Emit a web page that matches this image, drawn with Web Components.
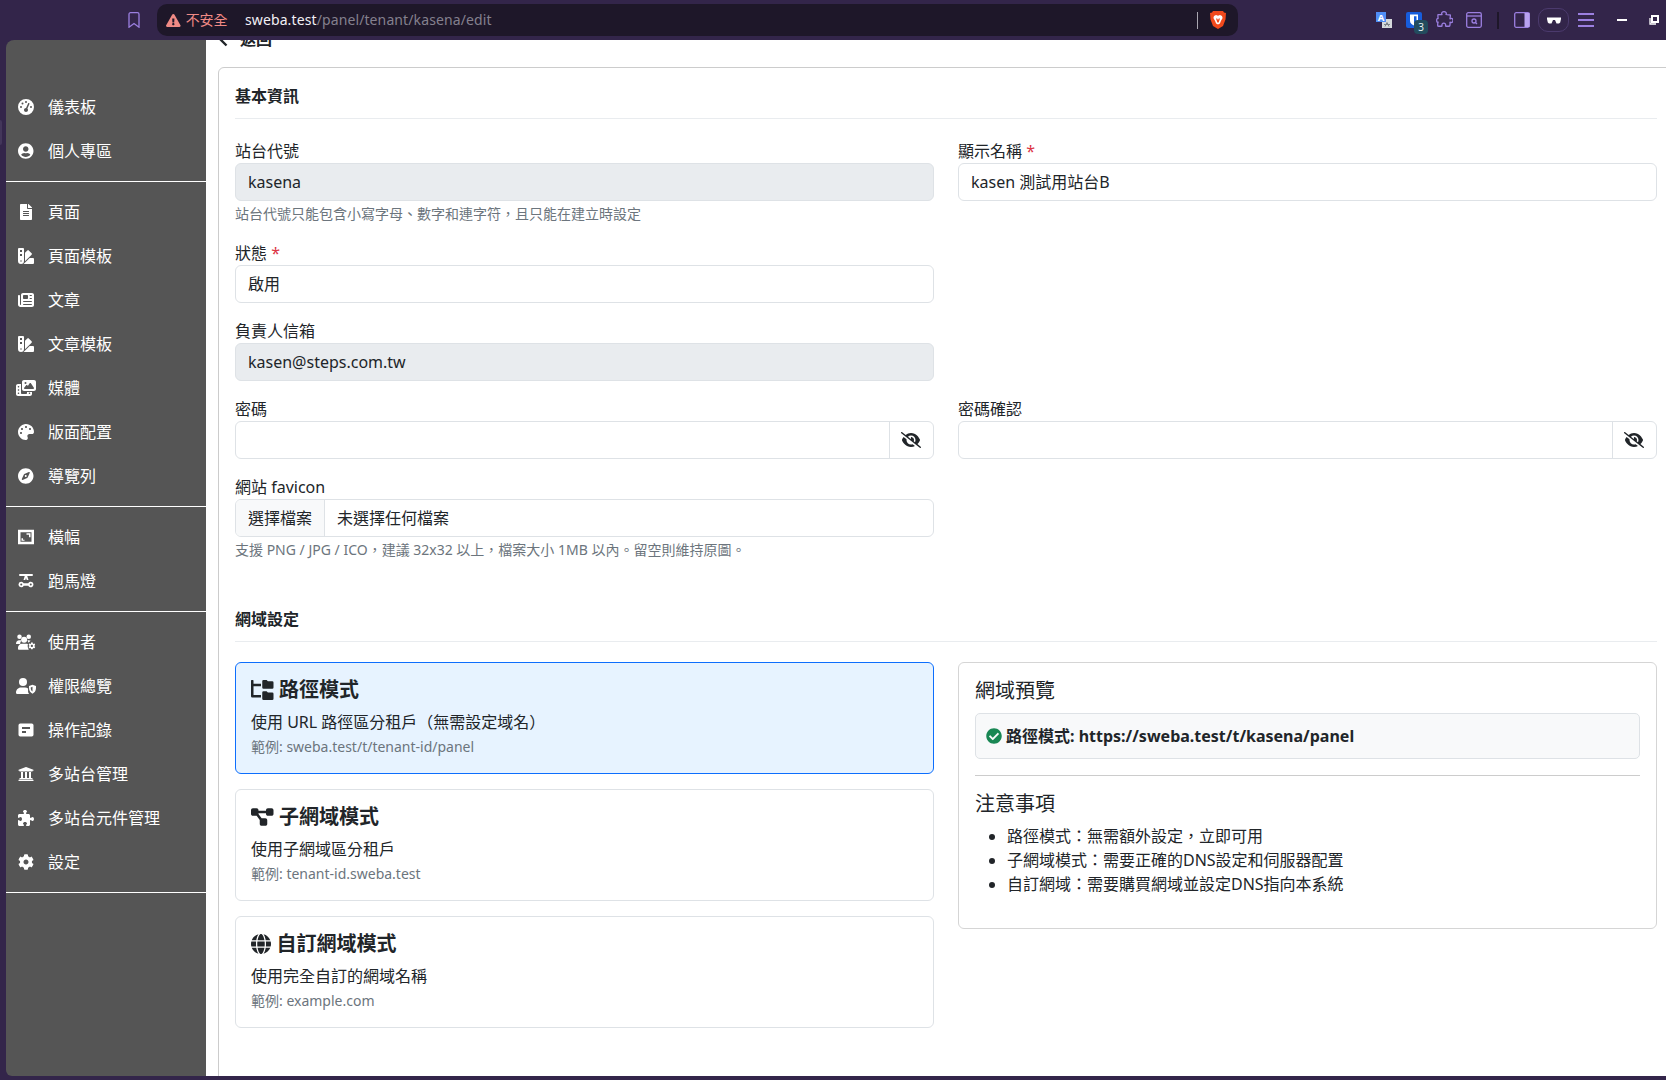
<!DOCTYPE html>
<html lang="zh-Hant">
<head>
<meta charset="utf-8">
<title>站台編輯</title>
<style>
  html, body { margin: 0; height: 100%; }
  body {
    width: 1666px;
    height: 1080px;
    overflow: hidden;
    background: #33254a;
    color: #212529;
    font: 16px/24px "Noto Sans", "Noto Sans CJK TC", sans-serif;
    display: flex;
    flex-direction: column;
    position: relative;
  }
  .app { display: flex; height: 1036px; padding-left: 6px; }
  .grid-2 { display: grid; grid-template-columns: 699px 699px; column-gap: 24px; align-items: start; }
  .stack { display: flex; flex-direction: column; gap: 15px; }
  .sheet-tab { position: absolute; left: 0; top: 120px; width: 2px; height: 25px; background: #43365a; border-radius: 0 3px 3px 0; }
</style>
</head>
<body>
<div class="sheet-tab"></div>
<browser-bar></browser-bar>
<div class="app">
  <side-nav>
    <nav-group>
      <nav-item icon="gauge">儀表板</nav-item>
      <nav-item icon="user-circle">個人專區</nav-item>
    </nav-group>
    <nav-group>
      <nav-item icon="file">頁面</nav-item>
      <nav-item icon="swatchbook">頁面模板</nav-item>
      <nav-item icon="newspaper">文章</nav-item>
      <nav-item icon="swatchbook">文章模板</nav-item>
      <nav-item icon="photo">媒體</nav-item>
      <nav-item icon="palette">版面配置</nav-item>
      <nav-item icon="compass">導覽列</nav-item>
    </nav-group>
    <nav-group>
      <nav-item icon="banner">橫幅</nav-item>
      <nav-item icon="carousel">跑馬燈</nav-item>
    </nav-group>
    <nav-group>
      <nav-item icon="users-gear">使用者</nav-item>
      <nav-item icon="user-shield">權限總覽</nav-item>
      <nav-item icon="logs">操作記錄</nav-item>
      <nav-item icon="landmark">多站台管理</nav-item>
      <nav-item icon="puzzle">多站台元件管理</nav-item>
      <nav-item icon="cog">設定</nav-item>
    </nav-group>
  </side-nav>
  <main-panel>
    <back-link>返回</back-link>
    <section-card>
      <form-section heading="基本資訊">
        <div class="grid-2">
          <form-field label="站台代號" value="kasena" readonly help="站台代號只能包含小寫字母、數字和連字符&#xFF0C;且只能在建立時設定"></form-field>
          <form-field label="顯示名稱" required value="kasen 測試用站台B"></form-field>
          <form-field label="狀態" required value="啟用"></form-field>
          <div></div>
          <form-field label="負責人信箱" value="kasen@steps.com.tw" readonly></form-field>
          <div></div>
          <form-field label="密碼" type="password"></form-field>
          <form-field label="密碼確認" type="password"></form-field>
          <form-field label="網站 favicon" type="file" value="未選擇任何檔案" help="支援 PNG / JPG / ICO&#xFF0C;建議 32x32 以上&#xFF0C;檔案大小 1MB 以內。留空則維持原圖。"></form-field>
        </div>
      </form-section>
      <form-section heading="網域設定" spaced>
        <div class="grid-2">
          <div class="stack">
            <mode-card icon="folder-tree" heading="路徑模式" active>
              使用 URL 路徑區分租戶&#xFF08;無需設定域名&#xFF09;
              <span slot="hint">範例: sweba.test/t/tenant-id/panel</span>
            </mode-card>
            <mode-card icon="diagram" heading="子網域模式">
              使用子網域區分租戶
              <span slot="hint">範例: tenant-id.sweba.test</span>
            </mode-card>
            <mode-card icon="globe" heading="自訂網域模式">
              使用完全自訂的網域名稱
              <span slot="hint">範例: example.com</span>
            </mode-card>
          </div>
          <domain-preview url="https://sweba.test/t/kasena/panel">
            <li>路徑模式&#xFF1A;無需額外設定&#xFF0C;立即可用</li>
            <li>子網域模式&#xFF1A;需要正確的DNS設定和伺服器配置</li>
            <li>自訂網域&#xFF1A;需要購買網域並設定DNS指向本系統</li>
          </domain-preview>
        </div>
      </form-section>
    </section-card>
  </main-panel>
</div>

<script>
const COG = 'M487.4 315.7l-42.6-24.6c4.3-23.2 4.3-47 0-70.2l42.6-24.6c4.9-2.8 7.1-8.6 5.5-14-11.1-35.6-30-67.8-54.7-94.6-3.8-4.1-10-5.1-14.8-2.3L380.8 110c-17.9-15.4-38.5-27.3-60.8-35.1V25.8c0-5.6-3.9-10.5-9.4-11.7-36.7-8.2-74.3-7.8-109.2 0-5.5 1.2-9.4 6.1-9.4 11.7V75c-22.2 7.9-42.8 19.8-60.8 35.1L88.7 85.5c-4.9-2.8-11-1.9-14.8 2.3-24.7 26.7-43.6 58.9-54.7 94.6-1.7 5.4.6 11.2 5.5 14L67.3 221c-4.3 23.2-4.3 47 0 70.2l-42.6 24.6c-4.9 2.8-7.1 8.6-5.5 14 11.1 35.6 30 67.8 54.7 94.6 3.8 4.1 10 5.1 14.8 2.3l42.6-24.6c17.9 15.4 38.5 27.3 60.8 35.1v49.2c0 5.6 3.9 10.5 9.4 11.7 36.7 8.2 74.3 7.8 109.2 0 5.5-1.2 9.4-6.1 9.4-11.7v-49.2c22.2-7.9 42.8-19.8 60.8-35.1l42.6 24.6c4.9 2.8 11 1.9 14.8-2.3 24.7-26.7 43.6-58.9 54.7-94.6 1.5-5.5-.7-11.3-5.6-14.1zM256 336c-44.1 0-80-35.9-80-80s35.9-80 80-80 80 35.9 80 80-35.9 80-80 80z';

const ICONS = {
  gauge: [512, '<path d="M0 256a256 256 0 1 1 512 0A256 256 0 1 1 0 256zM288 96a32 32 0 1 0 -64 0 32 32 0 1 0 64 0zM256 416c35.3 0 64-28.7 64-64c0-17.4-6.9-33.1-18.1-44.6L366 161.7c5.3-12.1-.2-26.3-12.3-31.6s-26.3 .2-31.6 12.3L257.9 288c-.6 0-1.3 0-1.9 0c-35.3 0-64 28.7-64 64s28.7 64 64 64zM176 144a32 32 0 1 0 -64 0 32 32 0 1 0 64 0zM96 288a32 32 0 1 0 0-64 32 32 0 1 0 0 64zm352-32a32 32 0 1 0 -64 0 32 32 0 1 0 64 0z"/>'],
  'user-circle': [496, '<path d="M248 8C111 8 0 119 0 256s111 248 248 248 248-111 248-248S385 8 248 8zm0 96c48.6 0 88 39.4 88 88s-39.4 88-88 88-88-39.4-88-88 39.4-88 88-88zm0 344c-58.7 0-111.3-26.6-146.5-68.2 18.8-35.4 55.6-59.8 98.5-59.8 2.4 0 4.8.4 7.1 1.1 13 4.2 26.6 6.9 40.9 6.9 14.3 0 28-2.7 40.9-6.9 2.3-.7 4.7-1.1 7.1-1.1 42.9 0 79.7 24.4 98.5 59.8C359.3 421.4 306.7 448 248 448z"/>'],
  file: [384, '<path d="M224 136V0H24C10.7 0 0 10.7 0 24v464c0 13.3 10.7 24 24 24h336c13.3 0 24-10.7 24-24V160H248c-13.2 0-24-10.8-24-24zm64 236c0 6.6-5.4 12-12 12H108c-6.6 0-12-5.4-12-12v-8c0-6.6 5.4-12 12-12h168c6.6 0 12 5.4 12 12v8zm0-64c0 6.6-5.4 12-12 12H108c-6.6 0-12-5.4-12-12v-8c0-6.6 5.4-12 12-12h168c6.6 0 12 5.4 12 12v8zm0-72v8c0 6.6-5.4 12-12 12H108c-6.6 0-12-5.4-12-12v-8c0-6.6 5.4-12 12-12h168c6.6 0 12 5.4 12 12zm96-114.1v6.1H256V0h6.1c6.4 0 12.5 2.5 17 7l97.9 98c4.5 4.5 7 10.6 7 16.9z"/>'],
  swatchbook: [512, '<path d="M434.66 167.71h0L344.5 77.36a31.83 31.83 0 0 0-45-.07h0l-.07.07L224 152.88V424L434.66 212.9A32 32 0 0 0 434.66 167.71ZM480 320H373.09L186.68 506.51c-2.06 2.07-4.5 3.58-6.68 5.49H480a32 32 0 0 0 32-32V352A32 32 0 0 0 480 320ZM192 32A32 32 0 0 0 160 0H32A32 32 0 0 0 0 32V416a96 96 0 0 0 192 0ZM96 440a24 24 0 1 1 24-24A24 24 0 0 1 96 440Zm32-184H64V192h64Zm0-128H64V64h64Z"/>'],
  newspaper: [512, '<path d="M96 96c0-35.3 28.7-64 64-64H448c35.3 0 64 28.7 64 64V416c0 35.3-28.7 64-64 64H80c-44.2 0-80-35.8-80-80V128c0-17.7 14.3-32 32-32s32 14.3 32 32V400c0 8.8 7.2 16 16 16s16-7.2 16-16V96zm64 24v80c0 13.3 10.7 24 24 24H296c13.3 0 24-10.7 24-24V120c0-13.3-10.7-24-24-24H184c-13.3 0-24 10.7-24 24zm208-8c0 8.8 7.2 16 16 16h48c8.8 0 16-7.2 16-16s-7.2-16-16-16H384c-8.8 0-16 7.2-16 16zm0 96c0 8.8 7.2 16 16 16h48c8.8 0 16-7.2 16-16s-7.2-16-16-16H384c-8.8 0-16 7.2-16 16zM160 304c0 8.8 7.2 16 16 16H432c8.8 0 16-7.2 16-16s-7.2-16-16-16H176c-8.8 0-16 7.2-16 16zm0 96c0 8.8 7.2 16 16 16H432c8.8 0 16-7.2 16-16s-7.2-16-16-16H176c-8.8 0-16 7.2-16 16z"/>'],
  photo: [640, '<path d="M256 0H576c35.3 0 64 28.7 64 64V288c0 35.3-28.7 64-64 64H256c-35.3 0-64-28.7-64-64V64c0-35.3 28.7-64 64-64zM476 106.7C471.5 100 464 96 456 96s-15.5 4-20 10.7l-56 84L362.7 169c-4.6-5.7-11.5-9-18.7-9s-14.2 3.3-18.7 9l-64 80c-5.8 7.2-6.9 17.1-2.9 25.4s12.4 13.6 21.6 13.6h80 48H552c8.9 0 17-4.9 21.2-12.7s3.7-17.3-1.2-24.6l-96-144zM336 96a32 32 0 1 0 -64 0 32 32 0 1 0 64 0zM64 128h96V384v32c0 17.7 14.3 32 32 32H320c17.7 0 32-14.3 32-32V384H512v64c0 35.3-28.7 64-64 64H64c-35.3 0-64-28.7-64-64V192c0-35.3 28.7-64 64-64zm8 64c-8.8 0-16 7.2-16 16v16c0 8.8 7.2 16 16 16H88c8.8 0 16-7.2 16-16V208c0-8.8-7.2-16-16-16H72zm0 104c-8.8 0-16 7.2-16 16v16c0 8.8 7.2 16 16 16H88c8.8 0 16-7.2 16-16V312c0-8.8-7.2-16-16-16H72zm0 104c-8.8 0-16 7.2-16 16v16c0 8.8 7.2 16 16 16H88c8.8 0 16-7.2 16-16V416c0-8.8-7.2-16-16-16H72zm336 16v16c0 8.8 7.2 16 16 16h16c8.8 0 16-7.2 16-16V416c0-8.8-7.2-16-16-16H424c-8.8 0-16 7.2-16 16z"/>'],
  palette: [512, '<path d="M204.3 5C104.9 24.4 24.8 104.3 5.2 203.4c-37 187 131.7 326.4 258.8 306.7 41.2-6.4 61.4-54.6 42.5-91.7-23.1-45.4 9.9-98.4 60.9-98.4h79.7c35.8 0 64.8-29.6 64.9-65.3C511.5 97.1 368.1-26.9 204.3 5zM96 320c-17.7 0-32-14.3-32-32s14.3-32 32-32 32 14.3 32 32-14.3 32-32 32zm32-128c-17.7 0-32-14.3-32-32s14.3-32 32-32 32 14.3 32 32-14.3 32-32 32zm128-64c-17.7 0-32-14.3-32-32s14.3-32 32-32 32 14.3 32 32-14.3 32-32 32zm128 64c-17.7 0-32-14.3-32-32s14.3-32 32-32 32 14.3 32 32-14.3 32-32 32z"/>'],
  compass: [496, '<path d="M225.38 233.37c-12.5 12.5-12.5 32.76 0 45.25 12.49 12.5 32.76 12.5 45.25 0 12.5-12.5 12.5-32.76 0-45.25-12.5-12.49-32.76-12.49-45.25 0zM248 8C111.03 8 0 119.03 0 256s111.03 248 248 248 248-111.03 248-248S384.97 8 248 8zm126.14 148.05L308.17 300.4a31.938 31.938 0 0 1-15.77 15.77l-144.34 65.97c-16.65 7.61-33.81-9.55-26.2-26.2l65.98-144.35a31.938 31.938 0 0 1 15.77-15.77l144.34-65.97c16.65-7.6 33.8 9.55 26.19 26.2z"/>'],
  banner: [512, '<path fill-rule="evenodd" d="M0 24h512v464H0zM80 104v304h352V104z"/><path d="M272 136h128v128h-48v-80h-80zM112 296h48v48h48v32h-96z"/>'],
  carousel: [512, '<path d="M64 32h384a32 32 0 0 1 0 64H296l40 128h-56l-24-64-24 64h-56l40-128H64a32 32 0 0 1 0-64z"/><path fill-rule="evenodd" d="M104 280a88 88 0 0 1 80 48h144a88 88 0 1 1 0 80H184a88 88 0 1 1-80-128zM104 336a32 32 0 1 0 0 64 32 32 0 1 0 0-64zM408 336a32 32 0 1 0 0 64 32 32 0 1 0 0-64z"/>'],
  'users-gear': [640, `<circle cx="112" cy="88" r="72"/><circle cx="408" cy="88" r="72"/><circle cx="260" cy="184" r="96"/><path d="M0 312c0-64 44-112 104-112h36c14 0 28 3 40 9-30 28-46 66-44 111H16c-9 0-16-2-16-8zM372 200h40c20 0 40 6 56 18l-72 62c-8-30-14-50-36-78zM64 480v-40c0-74 58-128 128-128h136c32 0 60 12 76 40v152H88c-14 0-24-10-24-24z"/><circle cx="508" cy="380" r="136" fill="#555"/><path transform="translate(396 268) scale(.44)" d="${COG}"/>`],
  'user-shield': [640, '<circle cx="224" cy="128" r="128"/><path d="M0 464c0-82 66-160 160-160h128c38 0 70 9 98 30v88c0 36 14 62 38 90H40c-22 0-40-18-40-48z"/><path fill-rule="evenodd" d="M528 212l112 46v70c0 84-54 148-112 172-58-24-112-88-112-172v-70zM528 280l-56 22v26c0 48 26 84 56 104z"/>'],
  logs: [512, '<path fill-rule="evenodd" d="M72 48h368a56 56 0 0 1 56 56v304a56 56 0 0 1-56 56H72a56 56 0 0 1-56-56V104a56 56 0 0 1 56-56zM128 160v64h256v-64zM128 288v64h128v-64z"/>'],
  landmark: [512, '<path d="M496 128v16a8 8 0 0 1-8 8h-24v12c0 6.627-5.373 12-12 12H60c-6.627 0-12-5.373-12-12v-12H24a8 8 0 0 1-8-8v-16a8 8 0 0 1 4.941-7.392l232-88a7.996 7.996 0 0 1 6.118 0l232 88A8 8 0 0 1 496 128zm-24 304H40c-13.255 0-24 10.745-24 24v16a8 8 0 0 0 8 8h464a8 8 0 0 0 8-8v-16c0-13.255-10.745-24-24-24zM96 192v192H60c-6.627 0-12 5.373-12 12v20h416v-20c0-6.627-5.373-12-12-12h-36V192h-64v192h-64V192h-64v192h-64V192H96z"/>'],
  puzzle: [512, '<path d="M192 104.8c0-9.2-5.8-17.3-13.2-22.8C167.2 73.3 160 61.3 160 48c0-26.5 28.7-48 64-48s64 21.5 64 48c0 13.3-7.2 25.3-18.8 34c-7.4 5.5-13.2 13.6-13.2 22.8v0c0 12.8 10.4 23.2 23.2 23.2H336c26.5 0 48 21.5 48 48v56.8c0 12.8 10.4 23.2 23.2 23.2v0c9.2 0 17.3-5.8 22.8-13.2c8.7-11.6 20.7-18.8 34-18.8c26.5 0 48 28.7 48 64s-21.5 64-48 64c-13.3 0-25.3-7.2-34-18.8c-5.5-7.4-13.6-13.2-22.8-13.2v0c-12.8 0-23.2 10.4-23.2 23.2V464c0 26.5-21.5 48-48 48H279.2c-12.8 0-23.2-10.4-23.2-23.2v0c0-9.2 5.8-17.3 13.2-22.8c11.6-8.7 18.8-20.7 18.8-34c0-26.5-28.7-48-64-48s-64 21.5-64 48c0 13.3 7.2 25.3 18.8 34c7.4 5.5 13.2 13.6 13.2 22.8v0c0 12.8-10.4 23.2-23.2 23.2H48c-26.5 0-48-21.5-48-48V343.2C0 330.4 10.4 320 23.2 320v0c9.2 0 17.3 5.8 22.8 13.2C54.7 344.8 66.7 352 80 352c26.5 0 48-28.7 48-64s-21.5-64-48-64c-13.3 0-25.3 7.2-34 18.8C40.5 250.2 32.4 256 23.2 256v0C10.4 256 0 245.6 0 232.8V176c0-26.5 21.5-48 48-48H168.8c12.8 0 23.2-10.4 23.2-23.2v0z"/>'],
  cog: [512, `<path d="${COG}"/>`],
  'folder-tree': [576, '<path d="M544 32H432L400 0h-80a32 32 0 0 0-32 32v160a32 32 0 0 0 32 32h224a32 32 0 0 0 32-32V64a32 32 0 0 0-32-32zm0 288H432l-32-32h-80a32 32 0 0 0-32 32v160a32 32 0 0 0 32 32h224a32 32 0 0 0 32-32V352a32 32 0 0 0-32-32zM64 16A16 16 0 0 0 48 0H16A16 16 0 0 0 0 16v400a32 32 0 0 0 32 32h224v-64H64V160h192V96H64z"/>'],
  diagram: [576, '<path d="M0 80C0 53.5 21.5 32 48 32h96c26.5 0 48 21.5 48 48V96H384V80c0-26.5 21.5-48 48-48h96c26.5 0 48 21.5 48 48v96c0 26.5-21.5 48-48 48H432c-26.5 0-48-21.5-48-48V160H192v16c0 1.7-.1 3.4-.3 5L272 288h96c26.5 0 48 21.5 48 48v96c0 26.5-21.5 48-48 48H272c-26.5 0-48-21.5-48-48V336c0-1.7 .1-3.4 .3-5L144 224H48c-26.5 0-48-21.5-48-48V80z"/>'],
  globe: [512, '<path d="M352 256c0 22.2-1.2 43.6-3.3 64H163.3c-2.2-20.4-3.3-41.8-3.3-64s1.2-43.6 3.3-64H348.7c2.2 20.4 3.3 41.8 3.3 64zm28.8-64H503.9c5.3 20.5 8.1 41.9 8.1 64s-2.8 43.5-8.1 64H380.8c2.1-20.6 3.2-42 3.2-64s-1.1-43.4-3.2-64zm112.6-32H376.7c-10-63.9-29.8-117.4-55.3-151.6c78.3 20.7 142 77.5 171.9 151.6zm-149.1 0H167.7c6.1-36.4 15.5-68.6 27-94.7c10.5-23.6 22.2-40.7 33.5-51.5C239.4 3.2 248.7 0 256 0s16.6 3.2 27.8 13.8c11.3 10.8 23 27.9 33.5 51.5c11.6 26 20.9 58.2 27 94.7zm-209 0H18.6C48.6 85.9 112.2 29.1 190.6 8.4C165.1 42.6 145.3 96.1 135.3 160zM8.1 192H131.2c-2.1 20.6-3.2 42-3.2 64s1.1 43.4 3.2 64H8.1C2.8 299.5 0 278.1 0 256s2.8-43.5 8.1-64zM194.7 446.6c-11.6-26-20.9-58.2-27-94.6H344.3c-6.1 36.4-15.5 68.6-27 94.6c-10.5 23.6-22.2 40.7-33.5 51.5C272.6 508.8 263.3 512 256 512s-16.6-3.2-27.8-13.8c-11.3-10.8-23-27.9-33.5-51.5zM135.3 352c10 63.9 29.8 117.4 55.3 151.6C112.2 482.9 48.6 426.1 18.6 352H135.3zm358.1 0c-30 74.1-93.6 130.9-171.9 151.6c25.5-34.2 45.2-87.7 55.3-151.6H493.4z"/>'],
  'eye-slash': [640, '<path d="M38.8 5.1C28.4-3.1 13.3-1.2 5.1 9.2S-1.2 34.7 9.2 42.9l592 464c10.4 8.2 25.5 6.3 33.7-4.1s6.3-25.5-4.1-33.7L525.6 386.7c39.6-40.6 66.4-86.1 79.9-118.4c3.3-7.9 3.3-16.7 0-24.6c-14.9-35.7-46.2-87.7-93-131.1C465.5 68.8 400.8 32 320 32c-68.2 0-125 26.3-169.3 60.8L38.8 5.1zM223.1 149.5C248.6 126.2 282.7 112 320 112c79.5 0 144 64.5 144 144c0 24.9-6.3 48.3-17.4 68.7L408 294.5c8.4-19.3 10.6-41.4 4.8-63.3c-11.1-41.5-47.8-69.4-88.6-71.1c-5.8-.2-9.2 6.1-7.4 11.7c2.1 6.4 3.3 13.2 3.3 20.3c0 10.2-2.4 19.8-6.6 28.3l-90.3-70.8zM373 389.9c-16.4 6.5-34.3 10.1-53 10.1c-79.5 0-144-64.5-144-144c0-6.9 .5-13.6 1.4-20.2L83.1 161.5C60.3 191.2 44 220.8 34.5 243.7c-3.3 7.9-3.3 16.7 0 24.6c14.9 35.7 46.2 87.7 93 131.1C174.5 443.2 239.2 480 320 480c47.8 0 89.9-12.9 126.2-32.5L373 389.9z"/>'],
  'check-circle': [512, '<path d="M504 256c0 136.967-111.033 248-248 248S8 392.967 8 256 119.033 8 256 8s248 111.033 248 248zM227.314 387.314l184-184c6.248-6.248 6.248-16.379 0-22.627l-22.627-22.627c-6.248-6.249-16.379-6.249-22.628 0L216 308.118l-70.059-70.059c-6.248-6.248-16.379-6.248-22.628 0l-22.627 22.627c-6.248 6.248-6.248 16.379 0 22.627l104 104c6.249 6.249 16.379 6.249 22.628.001z"/>'],
  warning: [576, '<path d="M569.517 440.013C587.975 472.007 564.806 512 527.94 512H48.054c-36.937 0-59.999-40.055-41.577-71.987L246.423 23.985c18.467-32.009 64.72-31.951 83.154 0l239.94 416.028zM288 354c-25.405 0-46 20.595-46 46s20.595 46 46 46 46-20.595 46-46-20.595-46-46-46zm-43.673-165.346l7.418 136c.347 6.364 5.609 11.346 11.982 11.346h48.546c6.373 0 11.635-4.982 11.982-11.346l7.418-136c.375-6.874-5.098-12.654-11.982-12.654h-63.383c-6.884 0-12.356 5.78-11.981 12.654z"/>'],
};

class FaIcon extends HTMLElement {
  connectedCallback() {
    const [w, body] = ICONS[this.getAttribute('name')];
    const h = +this.getAttribute('size') || 16;
    this.attachShadow({ mode: 'open' }).innerHTML = `
      <style>
        :host { display: inline-flex; align-items: center; justify-content: center; flex: none; line-height: 0; }
        svg { fill: currentColor; display: block; }
      </style>
      <svg width="${(w / 512) * h}" height="${h}" viewBox="0 0 ${w} 512">${body}</svg>`;
  }
}

class BrowserBar extends HTMLElement {
  connectedCallback() {
    this.attachShadow({ mode: 'open' }).innerHTML = `
      <style>
        :host {
          display: flex; align-items: center; flex: none;
          height: 40px; padding-left: 128px;
          background: #33254a; color: #9b7fe0;
          font-size: 14px; line-height: 20px;
        }
        svg { display: block; flex: none; }
        .omni {
          display: flex; align-items: center;
          width: 1081px; height: 32px; margin-left: 17px; padding-left: 9px;
          box-sizing: border-box; background: #1e1729; border-radius: 10px;
        }
        .warn { color: #f08a85; display: flex; align-items: center; gap: 5px; width: 79px; flex: none; }
        .host, .path { letter-spacing: .11px; }
        .host { color: #f2f0f5; }
        .path { color: #84808e; }
        .end { margin-left: auto; display: flex; align-items: center; gap: 12px; padding-right: 12px; }
        .bar { width: 1px; height: 17px; background: #a9a6b0; }
        .sep { width: 2px; height: 17px; background: #1e1729; margin-left: 15px; }
        .ext { position: relative; width: 16px; height: 16px; flex: none; }
        .badge {
          position: absolute; left: 8px; top: 8px; width: 14px; height: 14px; border-radius: 4px;
          background: #234c5e; color: #e6f1f4; font-size: 10px; line-height: 14px; text-align: center;
        }
        .pill { width: 31px; height: 24px; box-sizing: border-box; border: 1px solid #4b3a6d; border-radius: 10px; margin-left: 8px; display: flex; align-items: center; justify-content: center; }
      </style>
      <svg width="12" height="16" viewBox="0 0 12 16" fill="none" stroke="currentColor" stroke-width="1.3"><path d="M1 2.2A1.5 1.5 0 0 1 2.5.7h7A1.5 1.5 0 0 1 11 2.2v13L6 11.5 1 15.2z"/></svg>
      <div class="omni">
        <span class="warn"><fa-icon name="warning" size="13"></fa-icon>不安全</span>
        <span class="host">sweba.test</span><span class="path">/panel/tenant/kasena/edit</span>
        <span class="end">
          <span class="bar"></span>
          <svg width="16" height="18" viewBox="0 0 16 18"><path d="M3 0h10l1 1.5 2 .5-.5 6.5L13 15l-5 3-5-3-2.5-6.5L0 2l2-.5z" fill="#f1491c"/><path d="M4 5l2-1 2 .7L10 4l2 1 .6 2-1.7 3-1 2.5L8 13.5 6.1 12.5l-1-2.5-1.7-3z" fill="#fff"/><path d="M6 7.5h1.2L8 9l.8-1.5H10L8.7 11.5H7.3z" fill="#f1491c"/></svg>
        </span>
      </div>
      <svg style="margin-left:138px" width="16" height="16" viewBox="0 0 16 16"><rect x="6" y="7" width="10" height="9" fill="#d5d9dc"/><path d="M8 12.5h6M9 14.5l2-4 2 4" stroke="#7d8388" fill="none"/><rect width="10" height="10" fill="#4f8df5"/><text x="5" y="8.5" font-size="9.5" font-weight="bold" fill="#fff" text-anchor="middle" font-family="Noto Sans">A</text></svg>
      <div class="ext" style="margin-left:14px">
        <svg width="16" height="16" viewBox="0 0 16 16"><rect width="16" height="16" rx="2" fill="#175ddc"/><path d="M4 2.5h8v6.5c0 2-2 3.5-4 4.5-2-1-4-2.5-4-4.5z" fill="#fff"/><path d="M8 4.3h2.5V9c0 1-1.2 2-2.5 2.7z" fill="#175ddc"/></svg>
        <span class="badge">3</span>
      </div>
      <svg style="margin-left:14px" width="17" height="18" viewBox="0 0 17 18" fill="none" stroke="currentColor" stroke-width="1.3" stroke-linejoin="round"><path d="M6 3.5C5 1.5 6.5.7 8 .7s3 .8 2 2.8c1.5.5 3.3.3 4.3.3.3 1.5-.3 3-.3 4 2-1 3 0 3 1.7s-1 2.5-3 1.7c0 1 .3 2.5-.3 3.8-1.3.3-3 .3-4.2 0 .6-2-.5-2.8-1.7-2.8s-2.3.8-1.7 2.8c-1.3.3-3 .3-4.3 0-.3-1.5 0-3 .3-4C1 12 .7 10.5.7 9.5S1 7 2.1 7.5c0-1-.4-2.5-.1-3.8 1.3-.3 2.8 0 4-.2z"/></svg>
      <svg style="margin-left:13px" width="16" height="16" viewBox="0 0 16 16" fill="none" stroke="currentColor" stroke-width="1.3"><rect x=".7" y=".7" width="14.6" height="14.6" rx="1.5"/><path d="M.7 4h14.6"/><circle cx="8" cy="9" r="2"/><path d="M9.5 10.5L11 12"/></svg>
      <span class="sep"></span>
      <svg style="margin-left:15px" width="16" height="16" viewBox="0 0 16 16"><rect x=".7" y=".7" width="14.6" height="14.6" rx="1.5" fill="none" stroke="currentColor" stroke-width="1.3"/><rect x="10.5" y="1" width="5" height="14" fill="#b9a2f0"/></svg>
      <span class="pill"><svg width="14" height="7" viewBox="0 0 14 7"><path d="M0 .5h14v1.5l-.8 3.5-1.2 1H9.5L8 3H6L4.5 6.5H2l-1.2-1L0 2z" fill="#fff"/></svg></span>
      <svg style="margin-left:9px" width="16" height="16" viewBox="0 0 16 16" fill="currentColor"><rect y="1" width="16" height="2"/><rect y="7" width="16" height="2"/><rect y="13" width="16" height="2"/></svg>
      <svg style="margin-left:23px" width="10" height="2" viewBox="0 0 10 2" fill="#fff"><rect width="10" height="2"/></svg>
      <svg style="margin-left:22px" width="10" height="10" viewBox="0 0 10 10" fill="none" stroke="#fff" stroke-width="2"><path d="M3 1h6v6H3z"/><path d="M1 3v6h6" stroke-width="1.3"/></svg>`;
  }
}

class SideNav extends HTMLElement {
  constructor() {
    super();
    this.attachShadow({ mode: 'open' }).innerHTML = `
      <style>
        :host {
          display: block; flex: none; box-sizing: border-box;
          width: 200px; padding-top: 45px;
          background: #555; color: #fff;
          border-radius: 8px 0 0 6px;
        }
      </style>
      <slot></slot>`;
  }
}

class NavGroup extends HTMLElement {
  constructor() {
    super();
    this.attachShadow({ mode: 'open' }).innerHTML = `
      <style>
        :host { display: block; padding-bottom: 8px; margin-bottom: 8px; border-bottom: 1px solid #fff; }
      </style>
      <slot></slot>`;
  }
}

class NavItem extends HTMLElement {
  connectedCallback() {
    this.attachShadow({ mode: 'open' }).innerHTML = `
      <style>
        :host { display: flex; align-items: center; height: 44px; padding-left: 10px; gap: 12px; }
        .ico { width: 20px; display: flex; justify-content: center; }
      </style>
      <span class="ico"><fa-icon name="${this.getAttribute('icon')}"></fa-icon></span>
      <slot></slot>`;
  }
}

class MainPanel extends HTMLElement {
  constructor() {
    super();
    this.attachShadow({ mode: 'open' }).innerHTML = `
      <style>
        :host { display: block; flex: 1; min-width: 0; overflow: hidden; background: #fff; }
        .scroll { margin-top: -13px; padding-left: 12px; }
      </style>
      <div class="scroll"><slot></slot></div>`;
  }
}

class BackLink extends HTMLElement {
  constructor() {
    super();
    this.attachShadow({ mode: 'open' }).innerHTML = `
      <style>
        :host { display: flex; align-items: center; height: 24px; margin-bottom: 16px; font-weight: 700; gap: 12px; }
        svg { display: block; }
      </style>
      <svg width="10" height="16" viewBox="0 0 10 16" fill="none" stroke="#212529" stroke-width="2.4"><path d="M8.5 1.500L2 8l6.500 6.500"/></svg>
      <slot></slot>`;
  }
}

class SectionCard extends HTMLElement {
  constructor() {
    super();
    this.attachShadow({ mode: 'open' }).innerHTML = `
      <style>
        :host {
          display: block; box-sizing: border-box; width: 1456px; height: 1100px;
          padding: 16px; background: #fff;
          border: 1px solid #ccc; border-radius: 6px;
        }
      </style>
      <slot></slot>`;
  }
}

class FormSection extends HTMLElement {
  connectedCallback() {
    this.attachShadow({ mode: 'open' }).innerHTML = `
      <style>
        :host { display: block; }
        :host([spaced]) { margin-top: 30px; }
        h2 {
          margin: 0 0 20px; padding-bottom: 10px; height: 24px;
          font-size: 16px; line-height: 24px; font-weight: 700;
          border-bottom: 1px solid #e9ecef;
        }
      </style>
      <h2>${this.getAttribute('heading')}</h2>
      <slot></slot>`;
  }
}

class FormField extends HTMLElement {
  connectedCallback() {
    const type = this.getAttribute('type') || 'text';
    const value = this.getAttribute('value') || '';
    const help = this.getAttribute('help');
    const star = this.hasAttribute('required') ? ' <b>*</b>' : '';
    let control = `<div class="ctl">${value}</div>`;
    if (type === 'password') {
      control = `<div class="ctl pw"><span class="eye"><fa-icon name="eye-slash"></fa-icon></span></div>`;
    } else if (type === 'file') {
      control = `<div class="ctl file"><span class="btn">選擇檔案</span><span class="name">${value}</span></div>`;
    }
    this.attachShadow({ mode: 'open' }).innerHTML = `
      <style>
        :host { display: block; margin-bottom: 16px; }
        label { display: block; height: 24px; }
        b { color: #dc3545; font-weight: 400; }
        .ctl {
          box-sizing: border-box; height: 38px; padding: 0 12px;
          display: flex; align-items: center;
          border: 1px solid #dee2e6; border-radius: 6px; background: #fff;
        }
        :host([readonly]) .ctl { background: #e9ecef; }
        .pw { padding: 0; justify-content: flex-end; }
        .eye { width: 42px; padding-right: 1px; height: 100%; display: flex; align-items: center; justify-content: center; border-left: 1px solid #dee2e6; }
        .file { padding: 0; }
        .btn { width: 88px; height: 100%; display: flex; align-items: center; justify-content: center; background: #f8f9fa; border-right: 1px solid #dee2e6; border-radius: 5px 0 0 5px; }
        .name { padding-left: 12px; }
        .help { margin-top: 2px; height: 22px; font-size: 14px; line-height: 21px; color: #6c757d; white-space: nowrap; }
      </style>
      <label>${this.getAttribute('label')}${star}</label>
      ${control}
      ${help ? `<div class="help">${help}</div>` : ''}`;
  }
}

class ModeCard extends HTMLElement {
  connectedCallback() {
    this.attachShadow({ mode: 'open' }).innerHTML = `
      <style>
        :host {
          display: block; box-sizing: border-box; height: 112px; padding: 15px;
          border: 1px solid #dee2e6; border-radius: 6px; background: #fff;
        }
        :host([active]) { border-color: #0d6efd; background: #e7f3ff; }
        h3 { display: flex; align-items: center; gap: 5.5px; height: 24px; margin: 0 0 8px; font-size: 20px; line-height: 24px; font-weight: 700; }
        .desc { height: 24px; }
        .hint { margin-top: 2px; height: 21px; font-size: 14px; line-height: 21px; color: #6c757d; }
      </style>
      <h3><fa-icon name="${this.getAttribute('icon')}" size="20"></fa-icon>${this.getAttribute('heading')}</h3>
      <div class="desc"><slot></slot></div>
      <div class="hint"><slot name="hint"></slot></div>`;
  }
}

class DomainPreview extends HTMLElement {
  connectedCallback() {
    this.attachShadow({ mode: 'open' }).innerHTML = `
      <style>
        :host {
          display: block; box-sizing: border-box; height: 267px; padding: 16px;
          border: 1px solid #d5d5d5; border-radius: 6px; background: #fff;
        }
        h4 { margin: 0; height: 24px; font-size: 20px; line-height: 24px; font-weight: 400; }
        .box {
          box-sizing: border-box; height: 46px; margin: 10px 0 16px; padding: 0 10px;
          display: flex; align-items: center; gap: 4px;
          border: 1px solid #dee2e6; border-radius: 5px; background: #f8f9fa;
          font-weight: 700;
        }
        .ok { color: #198754; }
        hr { margin: 0 0 16px; border: 0; border-top: 1px solid #ccc; }
        ul { margin: 8px 0 0; padding-left: 32px; }
        ::slotted(li) { height: 24px; }
      </style>
      <h4>網域預覽</h4>
      <div class="box"><fa-icon class="ok" name="check-circle"></fa-icon><span>路徑模式: ${this.getAttribute('url')}</span></div>
      <hr>
      <h4>注意事項</h4>
      <ul><slot></slot></ul>`;
  }
}

customElements.define('fa-icon', FaIcon);
customElements.define('browser-bar', BrowserBar);
customElements.define('side-nav', SideNav);
customElements.define('nav-group', NavGroup);
customElements.define('nav-item', NavItem);
customElements.define('main-panel', MainPanel);
customElements.define('back-link', BackLink);
customElements.define('section-card', SectionCard);
customElements.define('form-section', FormSection);
customElements.define('form-field', FormField);
customElements.define('mode-card', ModeCard);
customElements.define('domain-preview', DomainPreview);
</script>
</body>
</html>
